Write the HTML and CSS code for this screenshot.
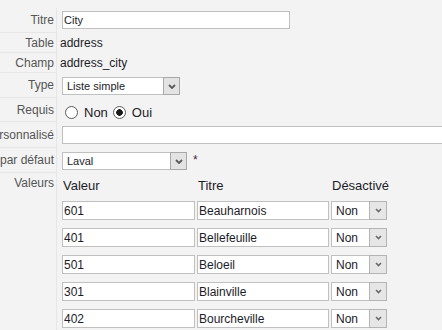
FILE: index.html
```html
<!DOCTYPE html>
<html lang="fr">
<head>
<meta charset="utf-8">
<title>Champ</title>
<link rel="stylesheet" href="styles.css">
</head>
<body>
<div class="form">
  <div class="row r-titre">
    <div class="lbl">Titre</div>
    <div class="val"><input class="txt w-titre" type="text" value="City"></div>
  </div>
  <div class="row r-text">
    <div class="lbl">Table</div>
    <div class="val">address</div>
  </div>
  <div class="row r-text">
    <div class="lbl">Champ</div>
    <div class="val">address_city</div>
  </div>
  <div class="row r-type">
    <div class="lbl">Type</div>
    <div class="val">
      <span class="sel w-type"><select><option>Liste simple</option></select><span class="btn"><svg width="8" height="5" viewBox="0 0 8 5"><path d="M1 1L4 4L7 1" fill="none" stroke="#5a5a5a" stroke-width="1.8"/></svg></span></span>
    </div>
  </div>
  <div class="row r-req">
    <div class="lbl">Requis</div>
    <div class="val radios">
      <label class="opt"><input type="radio" name="req">Non</label>
      <label class="opt"><input type="radio" name="req" checked>Oui</label>
    </div>
  </div>
  <div class="row r-perso">
    <div class="lbl">Titre personnalisé</div>
    <div class="val"><input class="txt w-perso" type="text" value=""></div>
  </div>
  <div class="row r-def">
    <div class="lbl">Valeur par défaut</div>
    <div class="val">
      <span class="sel w-def"><select><option>Laval</option></select><span class="btn"><svg width="8" height="5" viewBox="0 0 8 5"><path d="M1 1L4 4L7 1" fill="none" stroke="#5a5a5a" stroke-width="1.8"/></svg></span></span>
      <span class="star">*</span>
    </div>
  </div>
  <div class="row r-vals">
    <div class="lbl top">Valeurs</div>
    <div class="val">
      <div class="grid">
        <div class="hd">Valeur</div>
        <div class="hd">Titre</div>
        <div class="hd">Désactivé</div>

        <input class="cell" type="text" value="601">
        <input class="cell" type="text" value="Beauharnois">
        <span class="sel small"><select><option>Non</option></select><span class="btn"><svg width="7" height="5" viewBox="0 0 7 5"><path d="M1 1L3.5 3.5L6 1" fill="none" stroke="#6a6a6a" stroke-width="1.6"/></svg></span></span>

        <input class="cell" type="text" value="401">
        <input class="cell" type="text" value="Bellefeuille">
        <span class="sel small"><select><option>Non</option></select><span class="btn"><svg width="7" height="5" viewBox="0 0 7 5"><path d="M1 1L3.5 3.5L6 1" fill="none" stroke="#6a6a6a" stroke-width="1.6"/></svg></span></span>

        <input class="cell" type="text" value="501">
        <input class="cell" type="text" value="Beloeil">
        <span class="sel small"><select><option>Non</option></select><span class="btn"><svg width="7" height="5" viewBox="0 0 7 5"><path d="M1 1L3.5 3.5L6 1" fill="none" stroke="#6a6a6a" stroke-width="1.6"/></svg></span></span>

        <input class="cell" type="text" value="301">
        <input class="cell" type="text" value="Blainville">
        <span class="sel small"><select><option>Non</option></select><span class="btn"><svg width="7" height="5" viewBox="0 0 7 5"><path d="M1 1L3.5 3.5L6 1" fill="none" stroke="#6a6a6a" stroke-width="1.6"/></svg></span></span>

        <input class="cell" type="text" value="402">
        <input class="cell" type="text" value="Bourcheville">
        <span class="sel small"><select><option>Non</option></select><span class="btn"><svg width="7" height="5" viewBox="0 0 7 5"><path d="M1 1L3.5 3.5L6 1" fill="none" stroke="#6a6a6a" stroke-width="1.6"/></svg></span></span>

        <input class="cell" type="text" value="302">
        <input class="cell" type="text" value="Boisbriand">
        <span class="sel small"><select><option>Non</option></select><span class="btn"><svg width="7" height="5" viewBox="0 0 7 5"><path d="M1 1L3.5 3.5L6 1" fill="none" stroke="#6a6a6a" stroke-width="1.6"/></svg></span></span>
      </div>
    </div>
  </div>
</div>
</body>
</html>
```
FILE: styles.css
```css
html, body {
  margin: 0;
  padding: 0;
  overflow: hidden;
  background: #f3f3f3;
}
body {
  font-family: "Liberation Sans", Arial, sans-serif;
  font-size: 12px;
  color: #1c1c28;
}
.form {
  padding-top: 8px;
  width: 442px;
}
.row {
  display: flex;
}
.lbl {
  flex: 0 0 54px;
  width: 54px;
  padding-right: 2px;
  display: flex;
  align-items: center;
  justify-content: flex-end;
  white-space: nowrap;
  color: #555;
  border-right: 1px solid #e6e6e6;
  border-bottom: 1px solid #e6e6e6;
}
.lbl.top {
  align-items: flex-start;
  padding-top: 3px;
  line-height: 14px;
}
.val {
  flex: 1;
  padding-left: 3px;
  display: flex;
  align-items: center;
  white-space: nowrap;
  line-height: 14px;
}
.r-titre .val { padding-top: 3px; padding-bottom: 4px; }
.r-text .val { padding-top: 3px; padding-bottom: 3px; }
.r-type .val { padding-top: 4px; padding-bottom: 3px; }
.r-req .val { padding-top: 8px; padding-bottom: 3px; height: 13px; }
.r-perso .val { padding-top: 4px; padding-bottom: 4px; }
.r-def .val { padding-top: 4px; padding-bottom: 3px; }
.r-vals .val { align-items: flex-start; }

.txt, .cell {
  box-sizing: border-box;
  height: 18px;
  margin: 0 0 0 2px;
  padding: 0 1px;
  border: 1px solid #c0c0c0;
  background: #fff;
  font-family: "Liberation Sans", Arial, sans-serif;
  font-size: 11px;
  color: #1c1c28;
  outline: none;
}
.w-titre { width: 228px; }
.w-perso { width: 420px; }

.sel {
  box-sizing: border-box;
  display: inline-flex;
  height: 18px;
  margin-left: 2px;
  border: 1px solid #c0c0c0;
  background: #fff;
}
.sel select {
  appearance: none;
  -webkit-appearance: none;
  flex: 1;
  min-width: 0;
  border: 0;
  margin: 0;
  padding: 0 0 0 4px;
  background: #fff;
  font-family: "Liberation Sans", Arial, sans-serif;
  font-size: 11px;
  color: #1c1c28;
  outline: none;
}
.sel .btn {
  box-sizing: border-box;
  flex: 0 0 17px;
  display: flex;
  align-items: center;
  justify-content: center;
  background: #e3e3e3;
  border: 1px solid #a9a9a9;
  margin: -1px -1px -1px 0;
}
.w-type { width: 118px; }
.w-def { width: 125px; }
.star {
  margin-left: 6px;
  color: #3a2a4a;
  font-size: 12px;
  align-self: flex-start;
  margin-top: 1px;
}

.radios { gap: 0; }
.opt {
  display: inline-flex;
  align-items: center;
  font-size: 13px;
  margin-right: 5px;
}
.opt input {
  appearance: none;
  -webkit-appearance: none;
  box-sizing: border-box;
  width: 13px;
  height: 13px;
  margin: 0 6px 0 5px;
  border: 1px solid #5c5c5c;
  border-radius: 50%;
  background: #fff;
}
.opt input:checked {
  background: radial-gradient(circle, #1a1a1a 0, #1a1a1a 3px, #fff 3.6px);
}
.opt + .opt input { margin-left: 0; }

.grid {
  display: grid;
  grid-template-columns: 133px 132px 56px;
  column-gap: 2px;
  row-gap: 8px;
  margin-left: 2px;
  padding-top: 5px;
}
.hd {
  font-size: 13px;
  line-height: 15px;
  padding-left: 1px;
  color: #1c1c28;
}
.cell {
  width: 100%;
  height: 19px;
  margin: 0;
  font-size: 12px;
}
.sel.small {
  height: 19px;
  margin-left: 0;
  width: 56px;
}
.sel.small select { font-size: 12px; }
.sel.small .btn { flex-basis: 18px; background: #e6e6e6; border-color: #b4b4b4; }
```
